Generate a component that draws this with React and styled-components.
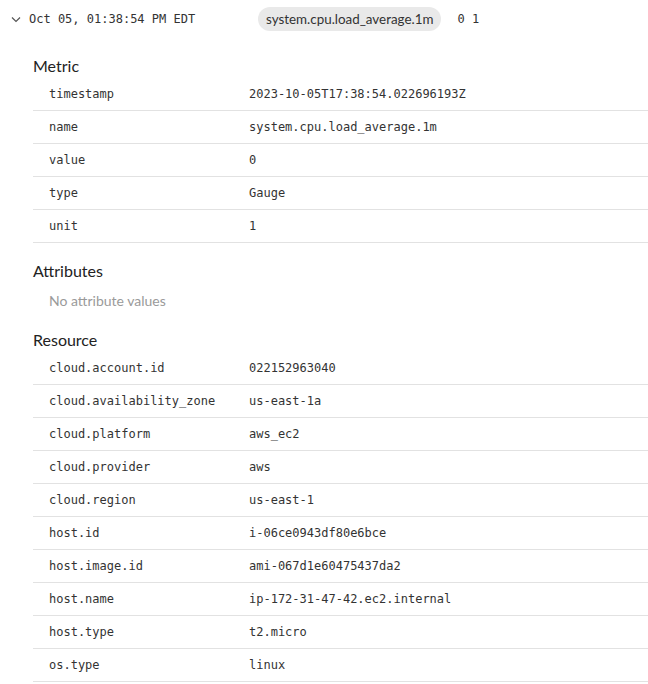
import React from "react";
import styled, { createGlobalStyle } from "styled-components";

const Global = createGlobalStyle`
  body {
    margin: 0;
    background: #fff;
    color: #2d2d2d;
    font-family: Lato, "Open Sans", sans-serif;
  }
`;

const Page = styled.div`
  width: 648px;
  overflow: hidden;
`;

const Header = styled.div`
  height: 37px;
  display: flex;
  align-items: center;
  padding-left: 10px;
  box-sizing: border-box;
`;

const Chevron = styled.svg`
  width: 12px;
  height: 12px;
  margin-right: 7px;
  color: #555;
`;

const Mono = styled.span`
  font-family: "DejaVu Sans Mono", monospace;
  font-size: 12px;
  color: #333;
`;

const DateText = styled(Mono)`
  width: 229px;
`;

const Pill = styled.span`
  height: 24px;
  line-height: 24px;
  padding: 0 8px;
  border-radius: 12px;
  background: #e9e9e9;
  font-size: 13.4px;
  color: #333;
  margin-right: 16px;
`;

const Content = styled.div`
  padding: 1px 0 0 33px;
`;

const Section = styled.section`
  padding-top: 16px;
`;

const Title = styled.h3`
  margin: 0;
  font-size: 16px;
  line-height: 24px;
  font-weight: 400;
  color: #222;
`;

const Row = styled.div`
  display: grid;
  grid-template-columns: 216px 1fr;
  height: 33px;
  align-items: center;
  border-bottom: 1px solid #e2e2e2;
  box-sizing: border-box;
`;

const Key = styled(Mono)`
  padding-left: 16px;
`;

const Empty = styled.div`
  padding: 7px 16px 0;
  font-size: 14px;
  line-height: 22px;
  color: #9a9a9a;
`;

const metric = [
  ["timestamp", "2023-10-05T17:38:54.022696193Z"],
  ["name", "system.cpu.load_average.1m"],
  ["value", "0"],
  ["type", "Gauge"],
  ["unit", "1"],
];

const resource = [
  ["cloud.account.id", "022152963040"],
  ["cloud.availability_zone", "us-east-1a"],
  ["cloud.platform", "aws_ec2"],
  ["cloud.provider", "aws"],
  ["cloud.region", "us-east-1"],
  ["host.id", "i-06ce0943df80e6bce"],
  ["host.image.id", "ami-067d1e60475437da2"],
  ["host.name", "ip-172-31-47-42.ec2.internal"],
  ["host.type", "t2.micro"],
  ["os.type", "linux"],
];

const Table = ({ rows }) =>
  rows.map(([k, v]) => (
    <Row key={k}>
      <Key>{k}</Key>
      <Mono>{v}</Mono>
    </Row>
  ));

export default function App() {
  return (
    <Page>
      <Global />
      <Header>
        <Chevron viewBox="0 0 12 12" fill="none" stroke="currentColor" strokeWidth="1.2">
          <path d="M2 4.5 L6 8.5 L10 4.5" />
        </Chevron>
        <DateText>Oct 05, 01:38:54 PM EDT</DateText>
        <Pill>system.cpu.load_average.1m</Pill>
        <Mono>0 1</Mono>
      </Header>
      <Content>
        <Section>
          <Title>Metric</Title>
          <Table rows={metric} />
        </Section>
        <Section>
          <Title>Attributes</Title>
          <Empty>No attribute values</Empty>
        </Section>
        <Section>
          <Title>Resource</Title>
          <Table rows={resource} />
        </Section>
      </Content>
    </Page>
  );
}
